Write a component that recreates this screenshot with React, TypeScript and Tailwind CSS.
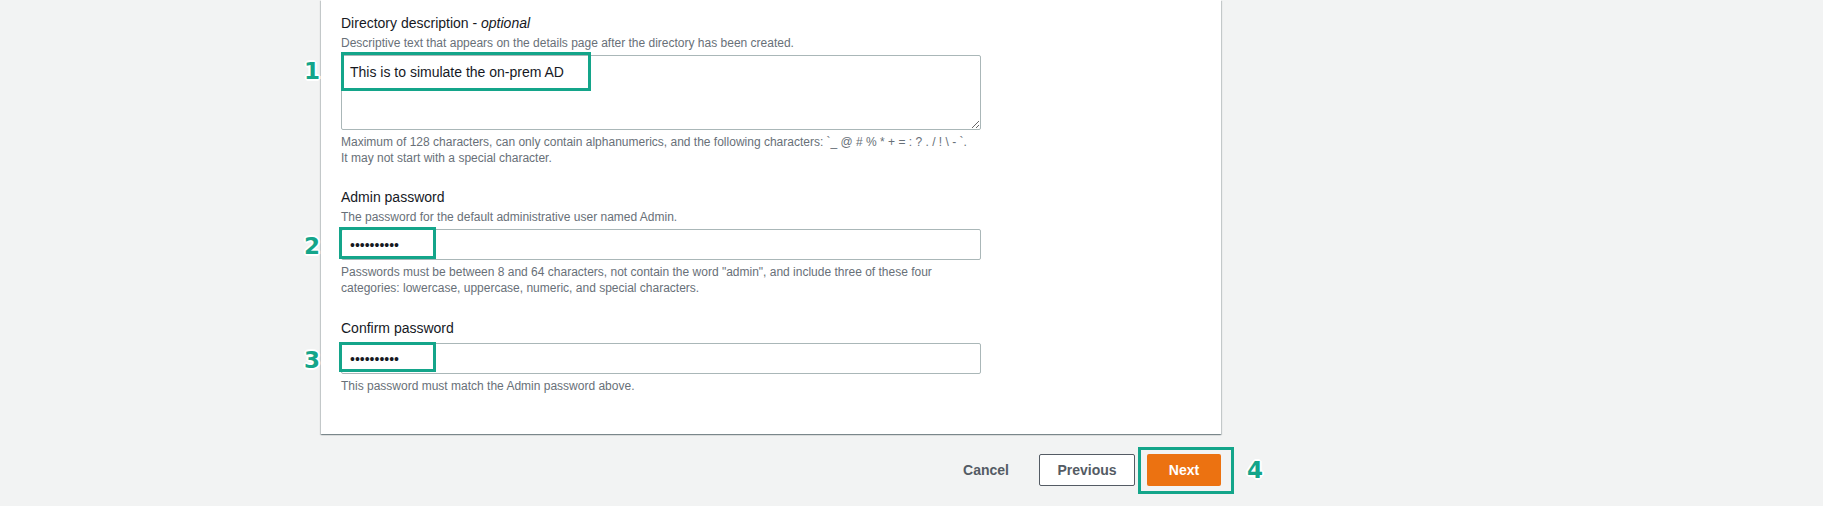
import React from 'react';

function Marker({ n, className }: { n: string; className: string }) {
  return (
    <span
      className={
        "absolute flex items-center font-['DejaVu_Sans',sans-serif] text-[23px] font-bold leading-none text-[#14a58a] [text-shadow:0_0_2px_#fff,1px_1px_0_#fff,-1px_-1px_0_#fff,1px_-1px_0_#fff,-1px_1px_0_#fff,2px_0_0_#fff,-2px_0_0_#fff,0_2px_0_#fff,0_-2px_0_#fff] " +
        className
      }
    >
      {n}
    </span>
  );
}

function Label({ children }: { children: React.ReactNode }) {
  return <div className="text-sm leading-5 text-[#16191f]">{children}</div>;
}

function Desc({ children }: { children: React.ReactNode }) {
  return <div className="mt-[2px] text-xs leading-4 text-[#687078]">{children}</div>;
}

function PasswordBox({ marker, boxClass }: { marker: string; boxClass: string }) {
  return (
    <div className="relative h-[31px] w-[640px] rounded-[2px] border border-[#aab7b8] bg-white">
      <div className="flex h-full items-center pl-2 text-sm text-[#16191f]">••••••••••</div>
      <div className={'absolute left-[-3px] w-[97px] border-[3px] border-[#14a58a] ' + boxClass} />
      <Marker n={marker} className="right-[calc(100%+22px)] top-0 h-[33px]" />
    </div>
  );
}

export default function App() {
  return (
    <div className="min-h-[519px] bg-white font-['Liberation_Sans',Arial,sans-serif]">
      <div className="bg-[#f2f3f3] pb-5 pl-[321px]">
        <div className="w-[900px]">
          <div className="bg-white px-5 pt-[13px] pb-10 shadow-[0_1px_1px_0_rgba(0,28,36,0.3),1px_1px_1px_0_rgba(0,28,36,0.15),-1px_1px_1px_0_rgba(0,28,36,0.15)]">
            {/* Directory description */}
            <Label>
              Directory description - <i>optional</i>
            </Label>
            <Desc>Descriptive text that appears on the details page after the directory has been created.</Desc>
            <div className="relative mt-1 w-[640px]">
              <textarea
                readOnly
                value="This is to simulate the on-prem AD"
                className="block h-[75px] w-[640px] rounded-[2px] border border-[#aab7b8] bg-white px-2 pt-[6px] text-sm leading-5 text-[#16191f] outline-none"
              />
              <div className="absolute left-0 top-[-3px] h-[39px] w-[250px] border-[3px] border-[#14a58a]" />
              <Marker n="1" className="right-[calc(100%+21px)] top-[-1px] h-[34px]" />
            </div>
            <div className="mt-1 text-xs leading-4 text-[#687078]">
              <div className="whitespace-nowrap">
                Maximum of 128 characters, can only contain alphanumerics, and the following characters: `_ @ # % * + = : ? . / ! \ - `.
              </div>
              <div className="whitespace-nowrap">It may not start with a special character.</div>
            </div>

            {/* Admin password */}
            <div className="mt-[21px]">
              <Label>Admin password</Label>
              <Desc>The password for the default administrative user named Admin.</Desc>
              <div className="mt-1">
                <PasswordBox marker="2" boxClass="top-[-3px] h-[32px]" />
              </div>
              <div className="mt-1 text-xs leading-4 text-[#687078]">
                <div className="whitespace-nowrap">
                  Passwords must be between 8 and 64 characters, not contain the word "admin", and include three of these four
                </div>
                <div className="whitespace-nowrap">categories: lowercase, uppercase, numeric, and special characters.</div>
              </div>
            </div>

            {/* Confirm password */}
            <div className="mt-[22px]">
              <Label>Confirm password</Label>
              <div className="mt-[5px]">
                <PasswordBox marker="3" boxClass="top-[-2px] h-[30px]" />
              </div>
              <div className="mt-1 text-xs leading-4 text-[#687078]">This password must match the Admin password above.</div>
            </div>
          </div>

          {/* Actions */}
          <div className="mt-5 flex items-center justify-end">
            <button className="px-5 text-sm font-bold leading-8 text-[#545b64]">Cancel</button>
            <button className="ml-[10px] flex h-8 w-[96px] items-center justify-center rounded-[2px] border border-[#545b64] bg-white text-sm font-bold text-[#545b64]">
              Previous
            </button>
            <div className="relative ml-3">
              <button className="flex h-8 w-[74px] items-center justify-center rounded-[2px] bg-[#ec7211] text-sm font-bold text-white">
                Next
              </button>
              <div className="absolute left-[-9px] top-[-7px] h-[47px] w-[96px] border-[3px] border-[#14a58a]" />
              <Marker n="4" className="left-[calc(100%+26px)] top-0 h-8" />
            </div>
          </div>
        </div>
      </div>
    </div>
  );
}
